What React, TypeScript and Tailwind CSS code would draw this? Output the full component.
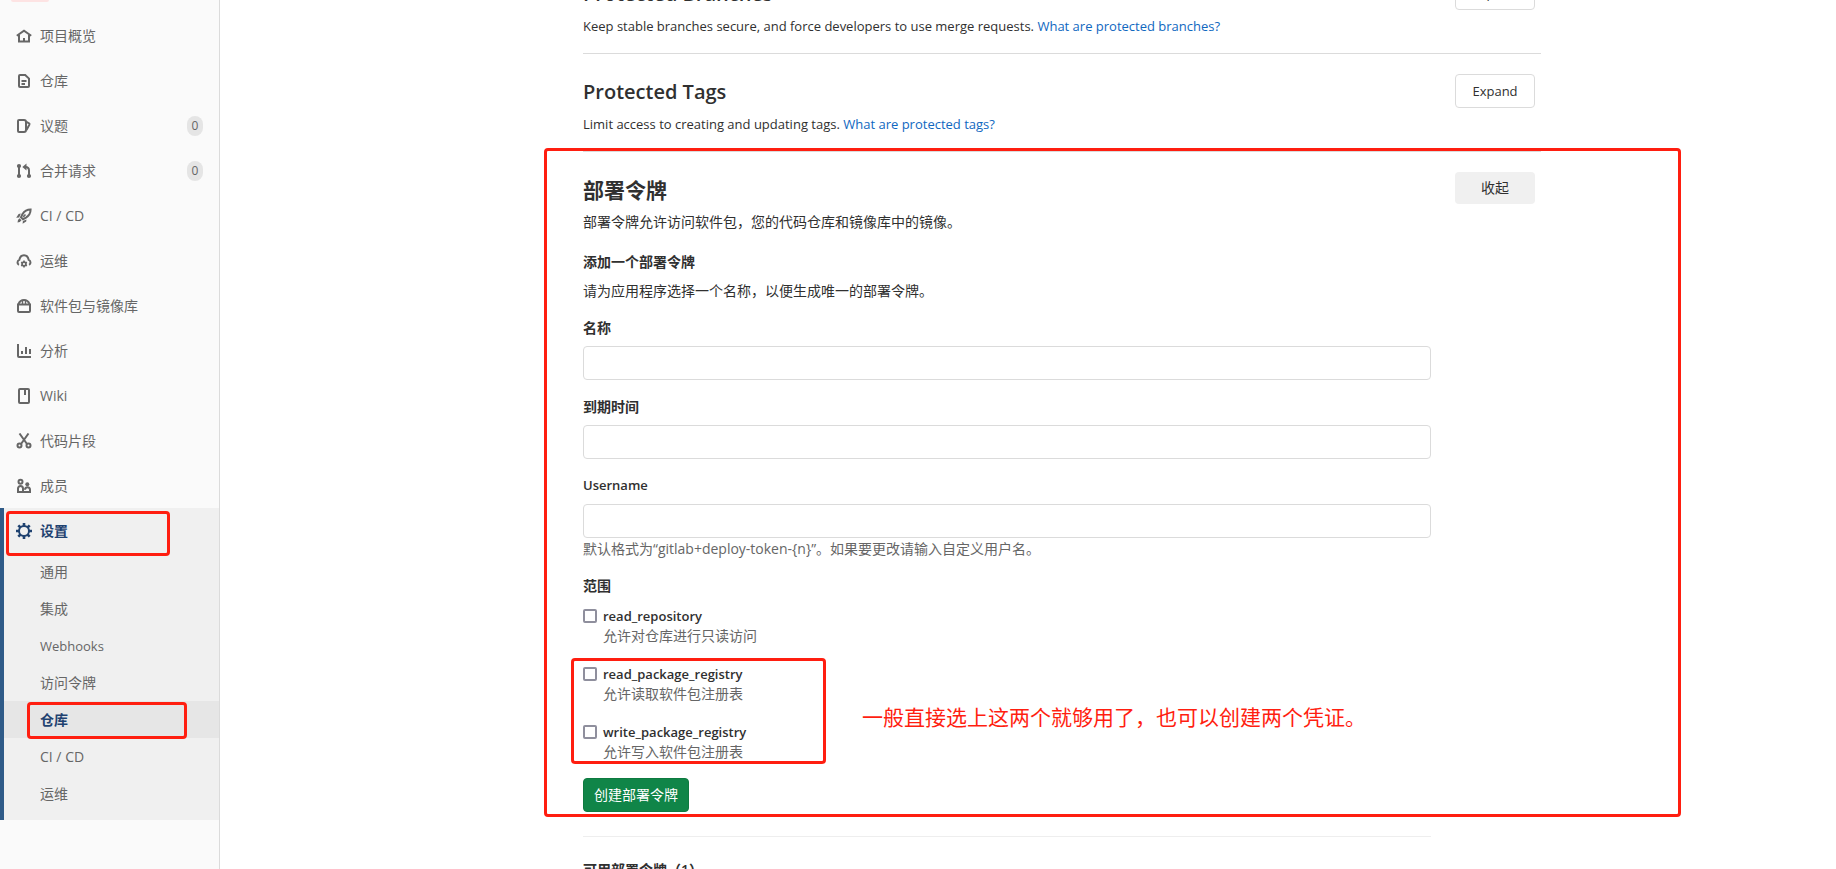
import type { ReactNode } from 'react';
import clsx from 'clsx';

interface NavItem {
  label: string;
  icon: ReactNode;
  count?: number;
}

interface Scope {
  name: string;
  description: string;
}

const mainNav: NavItem[] = [
  {
    label: '项目概览',
    icon: (
      <>
        <path d="M.8 7.800 8 2.800l7.200 5" />
        <path d="M3 7v6.500h10V7" />
        <path d="M8 10v3" />
      </>
    ),
  },
  {
    label: '仓库',
    icon: (
      <>
        <path d="M4 2h5.200L13 5.600V13a1 1 0 0 1-1 1H4a1 1 0 0 1-1-1V3a1 1 0 0 1 1-1z" />
        <path d="M5.500 8h5M5.500 11h3.500" strokeWidth="1.800" />
      </>
    ),
  },
  {
    label: '议题',
    count: 0,
    icon: (
      <>
        <path d="M3 2h5a2 2 0 0 1 2 2v8a2 2 0 0 1-2 2H3a1 1 0 0 1-1-1V3a1 1 0 0 1 1-1z" />
        <path d="M10 3.500l3 1.800a1 1 0 0 1 .4 1.300L10.500 12" />
      </>
    ),
  },
  {
    label: '合并请求',
    count: 0,
    icon: (
      <>
        <path d="M3 3v10" />
        <circle cx="3" cy="3" r="1.100" />
        <circle cx="3" cy="13" r="1.100" />
        <circle cx="13" cy="13" r="1.100" />
        <path d="M13 13V7.500C13 5.200 11.800 4 9.500 4H8.500" />
        <path d="M10.500 .5v7L6.300 4z" fill="currentColor" stroke="none" />
      </>
    ),
  },
  {
    label: 'CI / CD',
    icon: (
      <>
        <path d="M14.600 1.500c-3.600 0-6.200 1.600-8.100 4.600L5 9.200l2 2 3-1.600c3-1.900 4.600-4.500 4.600-8.100z" />
        <path d="M9.500 6.500l-2.300 2.400" strokeWidth="1.600" />
        <path d="M4.800 5.500 2.600 6 .2 9.800l3-.3zM10.500 11.400l-.3 2.200-3.600 2.200.3-2.900zM3.500 10.300l2 2-1.700 1.700-2.300.5.500-2.400z" fill="currentColor" stroke="none" />
      </>
    ),
  },
  {
    label: '运维',
    icon: (
      <>
        <path d="M2.900 11.800A2.700 2.700 0 0 1 3.300 6.900C3.900 4 5.700 2.300 8 2.300s4.100 1.700 4.700 4.600a2.700 2.700 0 0 1 .4 4.900" />
        <circle cx="8" cy="11" r="1.900" strokeWidth="1.600" />
        <path
          d="M8 7.600V9M8 13v1.500M5.100 9.300l1.200.7M9.700 12l1.200.7M5.100 12.700l1.200-.7M9.700 10l1.200-.7"
          strokeWidth="1.600"
        />
      </>
    ),
  },
  {
    label: '软件包与镜像库',
    icon: (
      <>
        <path d="M2 6.500h12V13a1 1 0 0 1-1 1H3a1 1 0 0 1-1-1z" />
        <path d="M2.500 6C3.500 3.500 5.500 2 8 2s4.500 1.500 5.500 4" />
        <path d="M6.500 3v3M9.500 3v3" strokeWidth="1.400" />
      </>
    ),
  },
  {
    label: '分析',
    icon: (
      <>
        <path d="M2 1v12a1 1 0 0 0 1 1h12" />
        <path d="M6 8v3M10 4v7M14 6v5" />
      </>
    ),
  },
  {
    label: 'Wiki',
    icon: (
      <>
        <path d="M4 1h8a1 1 0 0 1 1 1v12a1 1 0 0 1-1 1H4a1 1 0 0 1-1-1V2a1 1 0 0 1 1-1z" />
        <path d="M9 2v5" />
      </>
    ),
  },
  {
    label: '代码片段',
    icon: (
      <>
        <circle cx="3.500" cy="12.500" r="2" />
        <circle cx="12.500" cy="12.500" r="2" />
        <path d="M3.500 .5l7.500 10.500M12.500 .5L5 11" />
      </>
    ),
  },
  {
    label: '成员',
    icon: (
      <>
        <circle cx="4.500" cy="3.800" r="2" />
        <circle cx="11.300" cy="6.300" r="2" fill="currentColor" stroke="none" />
        <path d="M2 14v-3.500a2.500 2.500 0 0 1 5 0V14zM7.500 14H14v-2.300a2.500 2.500 0 0 0-5 0" />
      </>
    ),
  },
];

const settingsNav = ['通用', '集成', 'Webhooks', '访问令牌', '仓库', 'CI / CD', '运维'];

const recommendedScopes: Scope[] = [
  { name: 'read_package_registry', description: '允许读取软件包注册表' },
  { name: 'write_package_registry', description: '允许写入软件包注册表' },
];

function Icon({ children }: { children: ReactNode }) {
  return (
    <svg className="size-4 shrink-0" viewBox="0 0 16 16" fill="none" stroke="currentColor" strokeWidth="2" aria-hidden="true">
      {children}
    </svg>
  );
}

// Red marker frame drawn on top of whatever it surrounds
function Marker({ className }: { className: string }) {
  return <div className={clsx('pointer-events-none absolute rounded-[4px] border-3 border-[#ff1e10]', className)} />;
}

function Sidebar() {
  return (
    <aside className="w-[220px] shrink-0 overflow-hidden border-r border-[#dbdbdb] bg-[#fafafa] text-[#666]">
      <div className="mb-[11px] ml-[11px] h-0.5 w-[38px] rounded-b-sm bg-[#fde3e3]" />
      <nav>
        {mainNav.map((item) => (
          <a key={item.label} href="#" className="flex h-[45px] items-center gap-2 px-4">
            <Icon>{item.icon}</Icon>
            <span className="flex-1">{item.label}</span>
            {item.count !== undefined && (
              <span className="flex h-5 w-4 items-center justify-center rounded-full bg-[#e5e5e5] text-xs">
                {item.count}
              </span>
            )}
          </a>
        ))}

        {/* Settings group, open */}
        <div className="relative bg-[#f0f0f0] pb-2">
          <div className="absolute inset-y-0 left-0 w-1 bg-[#2f5b88]" />
          <div className="relative">
            <a href="#" className="flex h-[45px] items-center gap-2 px-4 font-semibold text-[#1f4270]">
              <Icon>
                <circle cx="8" cy="8" r="5" />
                <path
                  d="M8 0v3M8 13v3M0 8h3M13 8h3M2.300 2.300l2.200 2.200M11.500 11.500l2.200 2.200M2.300 13.700l2.200-2.200M11.500 4.500l2.200-2.200"
                  strokeWidth="2.600"
                />
              </Icon>
              设置
            </a>
            <Marker className="top-[3px] -bottom-[3px] left-1.5 w-[164px]" />
          </div>
          {settingsNav.map((label) => {
            const active = label === '仓库';
            return (
              <div key={label} className="relative">
                <a
                  href="#"
                  className={clsx(
                    'ml-1 flex h-[37px] items-center pl-9',
                    active && 'bg-[#e6e6e6] font-semibold text-[#1f4270]',
                    label === 'Webhooks' && 'text-[13px]',
                  )}
                >
                  {label}
                </a>
                {active && <Marker className="top-px -bottom-px left-[27px] w-40" />}
              </div>
            );
          })}
        </div>
      </nav>
    </aside>
  );
}

interface SectionHeaderProps {
  title: string;
  children: ReactNode;
  expanded?: boolean;
}

function SectionHeader({ title, children, expanded }: SectionHeaderProps) {
  return (
    <div className="flex items-start justify-between pt-5 pr-1.5">
      <div>
        <h4 className={clsx('mb-1 leading-9 font-semibold', expanded ? 'text-[21px]' : 'text-xl')}>{title}</h4>
        <p className={expanded ? 'text-sm' : 'text-[13px] leading-5'}>{children}</p>
      </div>
      <button
        type="button"
        className={clsx(
          'w-20 rounded-[4px] text-center',
          expanded ? 'h-8 bg-[#f0f0f0]' : 'h-[34px] border border-[#dbdbdb] bg-white text-[13px]',
        )}
      >
        {expanded ? '收起' : 'Expand'}
      </button>
    </div>
  );
}

interface FieldProps {
  id: string;
  label: string;
  labelClass?: string;
  help?: string;
}

function Field({ id, label, labelClass = 'text-sm', help }: FieldProps) {
  return (
    <div className="mb-4">
      <label htmlFor={id} className={clsx('mb-2 block font-semibold', labelClass)}>
        <span className="block leading-[21px]">{label}</span>
      </label>
      <input id={id} type="text" className="block h-[34px] w-full rounded-[4px] border border-[#dbdbdb] bg-white px-2.5" />
      {help && <span className="mt-px block text-[#666]">{help}</span>}
    </div>
  );
}

function ScopeOption({ name, description }: Scope) {
  return (
    <div>
      <div className="flex items-center gap-1.5">
        <input
          id={name}
          type="checkbox"
          className="size-3.5 appearance-none rounded-[2px] border-2 border-[#8f8f9d] bg-white checked:bg-[#1068bf]"
        />
        <label htmlFor={name} className="text-[13px] leading-5 font-semibold">
          {name}
        </label>
      </div>
      <p className="pl-5 text-[#666]">{description}</p>
    </div>
  );
}

export default function App() {
  return (
    <div className="flex h-screen overflow-hidden bg-white font-['Open_Sans','Noto_Sans_CJK_SC',sans-serif] text-sm leading-5 text-[#303030]">
      <Sidebar />

      <main className="min-w-0 flex-1 overflow-hidden pl-[68px]">
        {/* Page is scrolled part of the way into the first section */}
        <div className="mx-auto -mt-11 max-w-[958px]">
          <section className="h-[98px] border-b border-[#dbdbdb]">
            <SectionHeader title="Protected Branches">
              Keep stable branches secure, and force developers to use merge requests.{' '}
              <a href="#" className="text-[#1068bf]">What are protected branches?</a>
            </SectionHeader>
          </section>

          <section className="h-[98px] border-b border-[#dbdbdb]">
            <SectionHeader title="Protected Tags">
              Limit access to creating and updating tags.{' '}
              <a href="#" className="text-[#1068bf]">What are protected tags?</a>
            </SectionHeader>
          </section>

          <section>
            <div className="relative">
              <SectionHeader title="部署令牌" expanded>
                部署令牌允许访问软件包，您的代码仓库和镜像库中的镜像。
              </SectionHeader>

              <form className="mr-[110px] pt-5">
                <h5 className="mb-[9px] font-semibold">添加一个部署令牌</h5>
                <p className="mb-4">请为应用程序选择一个名称，以便生成唯一的部署令牌。</p>

                <Field id="token-name" label="名称" />
                <Field id="token-expires" label="到期时间" />
                <Field
                  id="token-username"
                  label="Username"
                  labelClass="text-[13px]"
                  help="默认格式为“gitlab+deploy-token-{n}”。如果要更改请输入自定义用户名。"
                />

                <fieldset className="mb-4">
                  <legend className="mb-2.5 leading-[21px] font-semibold">范围</legend>
                  <div className="flex flex-col gap-[18px]">
                    <ScopeOption name="read_repository" description="允许对仓库进行只读访问" />
                    <div className="relative flex w-fit flex-col gap-[18px]">
                      {recommendedScopes.map((scope) => (
                        <ScopeOption key={scope.name} {...scope} />
                      ))}
                      <Marker className="-top-1.5 -bottom-0.5 -left-3 w-[255px]" />
                      <p className="absolute top-[39px] left-[279px] text-[21px] leading-7 whitespace-nowrap text-[#ff1e10]">
                        一般直接选上这两个就够用了，也可以创建两个凭证。
                      </p>
                    </div>
                  </div>
                </fieldset>

                <button type="submit" className="h-[34px] rounded-[4px] border border-[#0e7a40] bg-[#108548] px-2.5 text-white">
                  创建部署令牌
                </button>
              </form>

              <Marker className="-top-1 -right-[140px] -bottom-[5px] -left-[39px]" />
            </div>

            <hr className="mt-6 mr-[110px] border-[#eee]" />
            <h5 className="mt-[23px] font-semibold">可用部署令牌（1）</h5>
          </section>
        </div>
      </main>
    </div>
  );
}
